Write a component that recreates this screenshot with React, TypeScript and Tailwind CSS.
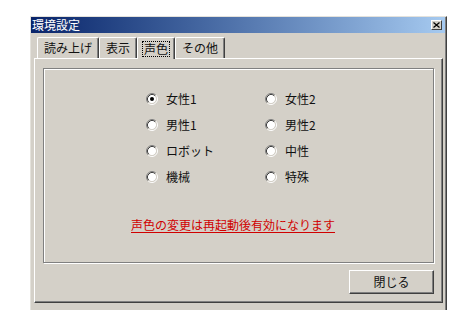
import React from 'react';

const font = { fontFamily: '"Noto Sans CJK JP", "MS UI Gothic", sans-serif' };

const Radio = ({ checked }: { checked?: boolean }) => (
  <svg width="12" height="12" viewBox="0 0 12 12" className="shrink-0">
    <circle cx="6" cy="6" r="4.2" fill="#ffffff" />
    <path d="M2.11 9.89 A5.5 5.5 0 0 1 9.89 2.11" fill="none" stroke="#808080" strokeWidth="1" />
    <path d="M9.89 2.11 A5.5 5.5 0 0 1 2.11 9.89" fill="none" stroke="#ffffff" strokeWidth="1" />
    <path d="M2.82 9.18 A4.5 4.5 0 0 1 9.18 2.82" fill="none" stroke="#404040" strokeWidth="1" />
    <path d="M9.18 2.82 A4.5 4.5 0 0 1 2.82 9.18" fill="none" stroke="#d4d0c8" strokeWidth="1" />
    {checked && <circle cx="6" cy="6" r="2" fill="#000000" />}
  </svg>
);

const voices = [
  ['女性1', '女性2'],
  ['男性1', '男性2'],
  ['ロボット', '中性'],
  ['機械', '特殊'],
];

const tabs = ['読み上げ', '表示', '声色', 'その他'];

export default function App() {
  return (
    <div className="h-[310px] w-[468px] overflow-hidden bg-white pt-[16px] pl-[30px] text-[12px] text-[#111]" style={font}>
      {/* Window */}
      <div className="flex h-[296px] w-[417px] flex-col border border-l-[#e4e2dc] border-t-[#e4e2dc] border-r-[#404040] border-b-[#404040] bg-[#d4d0c8] shadow-[inset_-1px_-1px_#808080]">
        {/* Title bar */}
        <div className="mr-[1px] flex h-[16px] items-center justify-between bg-linear-to-r from-[#0a246a] to-[#a6caf0] pl-[1px] pr-[3px]">
          <span className="leading-[16px] text-white">環境設定</span>
          <div className="flex h-[10px] w-[11px] items-center justify-center border border-l-white border-t-white border-r-[#404040] border-b-[#404040] bg-[#d4d0c8]">
            <svg width="7" height="6" viewBox="0 0 7 6">
              <path d="M0.5 0.5 L6.5 5.5 M6.5 0.5 L0.5 5.5" stroke="#000" strokeWidth="1.2" />
            </svg>
          </div>
        </div>

        {/* Tabs */}
        <div className="mt-[4px] flex h-[21px] pl-[6px]">
          {tabs.map((t) => {
            const active = t === '声色';
            return (
              <div
                key={t}
                className={`flex h-[21px] items-center rounded-t-[2px] border-l border-t border-l-white border-t-white border-r border-r-[#404040] px-[4px] shadow-[inset_-1px_0_#808080] ${
                  active ? 'z-10 -mb-[1px] h-[22px] bg-[#d4d0c8]' : ''
                }`}
              >
                {active ? (
                  <span className="border border-dotted border-black px-[1px] leading-[14px]">{t}</span>
                ) : (
                  <span className="px-[2px] leading-[14px]">{t}</span>
                )}
              </div>
            );
          })}
        </div>

        {/* Tab page */}
        <div className="mx-[3px] mb-[8px] flex flex-1 flex-col border border-l-white border-t-white border-r-[#404040] border-b-[#404040] px-[8px] pt-[9px] pb-[8px] shadow-[inset_-1px_-1px_#808080]">
          <div className="flex h-[195px] flex-col border border-[#808080] pt-[17px] pl-[102px] shadow-[inset_1px_1px_0_white,1px_1px_0_white]">
            <div className="grid grid-cols-[119px_119px]">
              {voices.map((row, i) =>
                row.map((v, j) => (
                  <div key={v} className="flex h-[26px] items-center gap-[8px]">
                    <Radio checked={i === 0 && j === 0} />
                    <span className="leading-[14px]">{v}</span>
                  </div>
                ))
              )}
            </div>
            <div className="mt-[27px] -ml-[15px] leading-[16px] text-[#d00000] underline underline-offset-[2px]">
              声色の変更は再起動後有効になります
            </div>
          </div>

          <div className="mt-auto flex justify-end">
            <button className="flex h-[24px] w-[85px] items-center justify-center border border-l-white border-t-white border-r-[#404040] border-b-[#404040] bg-[#d4d0c8] shadow-[inset_-1px_-1px_#808080]">
              閉じる
            </button>
          </div>
        </div>
      </div>
    </div>
  );
}
